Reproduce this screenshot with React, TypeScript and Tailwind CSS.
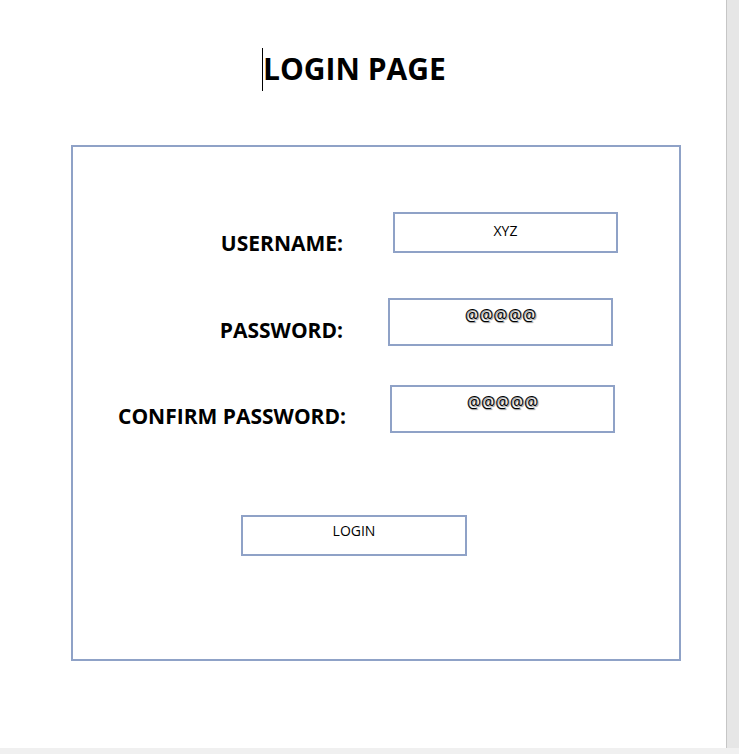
import React from "react";

const font = { fontFamily: '"Open Sans", "Noto Sans", sans-serif' };

function Field({ value, shadow, className }: { value: string; shadow?: boolean; className: string }) {
  return (
    <div className={`shrink-0 border-2 border-[#8fa2c7] bg-white text-center text-black ${className}`}>
      <span
        className={
          shadow
            ? "text-[16px] leading-[22px] [text-shadow:1px_1px_1px_rgba(0,0,0,0.45)]"
            : "text-[14px] leading-[20px]"
        }
      >
        {value}
      </span>
    </div>
  );
}

export default function App() {
  return (
    <div className="w-[739px] h-[754px] flex flex-col bg-white overflow-hidden" style={font}>
      <div className="flex flex-1 min-h-0">
        <div className="w-[726px] flex flex-col">
          <div className="flex items-start pt-[46px] pl-[262px]">
            <div className="mt-[2px] w-px h-[43px] bg-black" />
            <h1 className="mt-[1px] text-[30px] leading-[43px] font-bold text-black">LOGIN PAGE</h1>
          </div>
          <div className="mt-[54px] ml-[71px] w-[610px] h-[516px] border-2 border-[#8fa2c7] flex flex-col">
            <div className="mt-[65px] h-[41px] flex items-start">
              <div className="w-[270px] shrink-0 mt-[17px] text-right text-[21px] leading-[28px] font-bold text-black">USERNAME:</div>
              <Field value="XYZ" className="ml-[50px] w-[225px] h-[41px] pt-[4px]" />
            </div>
            <div className="mt-[45px] h-[48px] flex items-start">
              <div className="w-[270px] shrink-0 mt-[18px] text-right text-[21px] leading-[28px] font-bold text-black">PASSWORD:</div>
              <Field value="@@@@@" shadow className="ml-[45px] w-[225px] h-[48px] pt-[3px]" />
            </div>
            <div className="mt-[39px] h-[48px] flex items-start">
              <div className="w-[273px] shrink-0 mt-[17px] text-right text-[21px] leading-[28px] font-bold text-black">CONFIRM PASSWORD:</div>
              <Field value="@@@@@" shadow className="ml-[44px] w-[225px] h-[48px] pt-[3px]" />
            </div>
            <div className="mt-[82px] ml-[168px]">
              <Field value="LOGIN" className="w-[226px] h-[41px] pt-[1px]" />
            </div>
          </div>
        </div>
        <div className="flex-1 border-l border-[#c6c6c6] bg-[#e6e6e6]" />
      </div>
      <div className="h-[6px] bg-[#f0f0f0]" />
    </div>
  );
}
